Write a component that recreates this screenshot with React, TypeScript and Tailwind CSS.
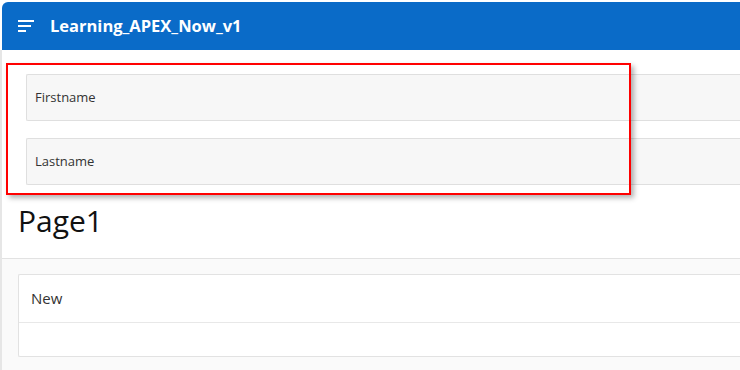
export default function App() {
  return (
    <div
      className="relative h-[370px] w-[740px] overflow-hidden bg-white pt-[2px]"
      style={{ fontFamily: '"Open Sans", "Noto Sans", sans-serif' }}
    >
      <header className="ml-[2px] flex h-[48px] items-center rounded-tl-md bg-[#0a6bc8] pl-[16px] text-white">
        <svg width="16" height="14" viewBox="0 0 16 14" className="mr-[16px]">
          <rect x="0" y="1" width="16" height="2" fill="white" />
          <rect x="0" y="6" width="13" height="2" fill="white" />
          <rect x="0" y="11" width="8" height="2" fill="white" />
        </svg>
        <span className="text-[16.5px] font-bold">Learning_APEX_Now_v1</span>
      </header>

      <main className="border-l-2 border-[#e6e6e6]">
        <div className="bg-white">
          <div className="flex flex-col gap-[17px] pt-[24px] pl-[24px]">
            <div className="flex h-[47px] items-center rounded-l-[2px] border border-r-0 border-[#dfdfdf] bg-[#f7f7f7] pl-[8px] text-[13px] text-[#333]">
              Firstname
            </div>
            <div className="flex h-[47px] items-center rounded-l-[2px] border border-r-0 border-[#dfdfdf] bg-[#f7f7f7] pl-[8px] text-[13px] text-[#333]">
              Lastname
            </div>
          </div>
          <h1 className="flex h-[73px] items-center pl-[16px] pb-[2px] text-[30px] font-medium text-[#111]">
            Page1
          </h1>
        </div>

        <section className="h-[200px] border-t border-[#e2e2e2] bg-[#fafafa] pt-[15px] pl-[16px]">
          <div className="rounded-l-[2px] border border-r-0 border-[#e2e2e2] bg-white">
            <div className="flex h-[48px] items-center border-b border-[#e8e8e8] pl-[12px] text-[15px] text-[#333]">
              New
            </div>
            <div className="h-[33px]" />
          </div>
        </section>
      </main>

      <div className="absolute left-[6px] top-[63px] h-[132px] w-[625px] border-2 border-[#ff0000] shadow-[3px_3px_5px_rgba(0,0,0,0.3)]" />
    </div>
  )
}
